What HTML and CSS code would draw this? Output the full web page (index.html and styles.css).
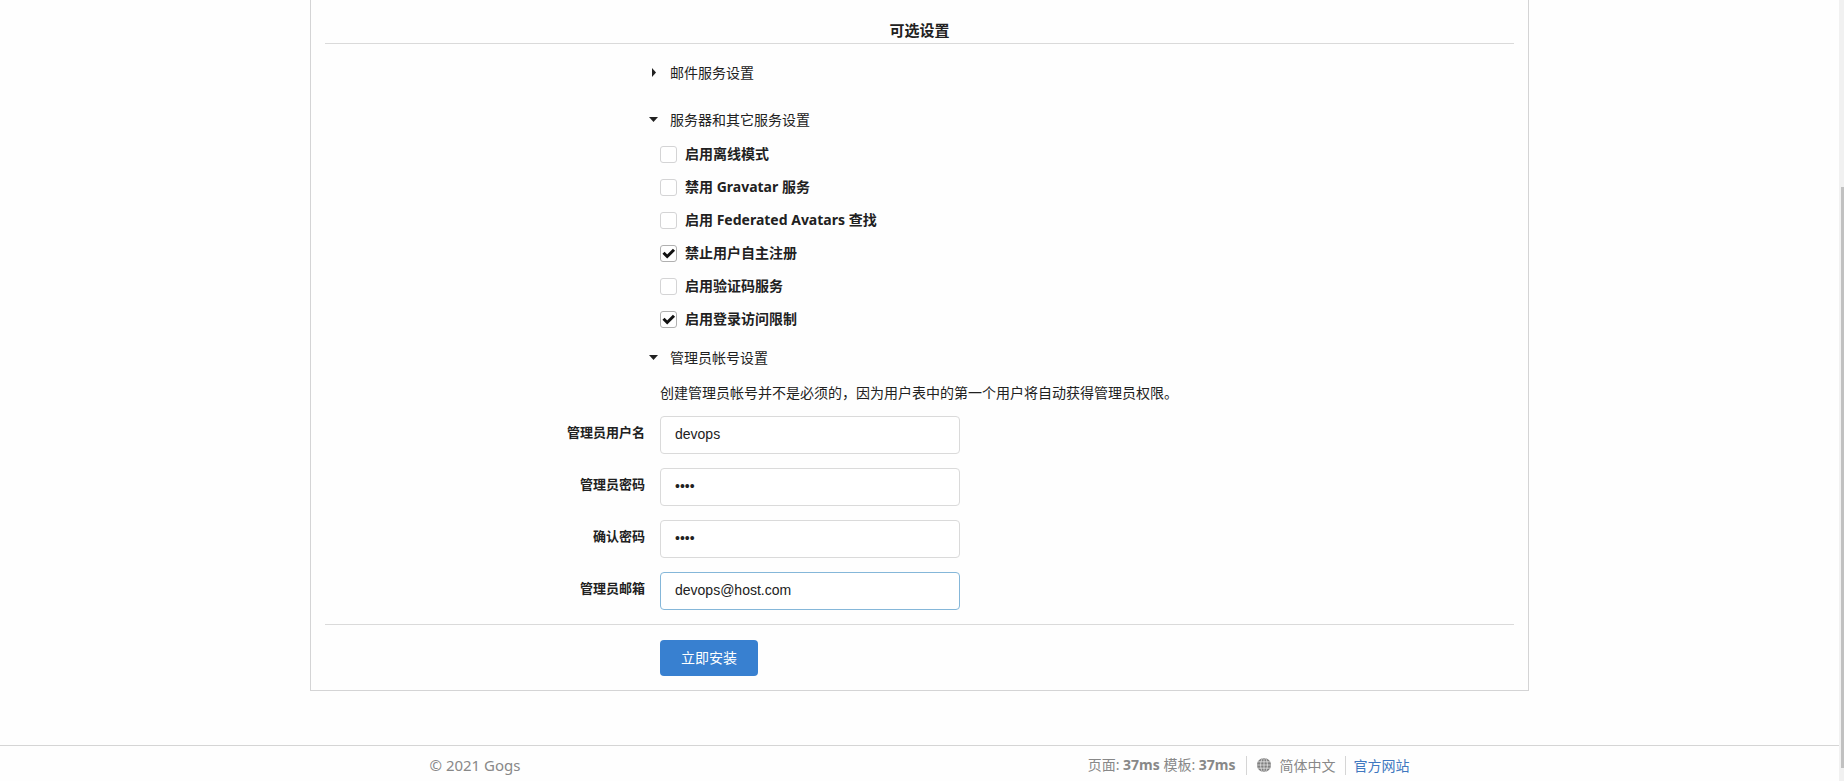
FILE: index.html
```html
<!DOCTYPE html>
<html lang="zh-CN">
<head>
<meta charset="utf-8">
<title>Gogs</title>
<link rel="stylesheet" href="styles.css">
</head>
<body>
<div class="page">
  <main class="content">
    <form class="card">
      <h4 class="divider-title">可选设置</h4>

      <button type="button" class="toggle toggle-closed"><svg class="caret" viewBox="0 0 10 10"><path d="M3 0v9l4-4.500z"/></svg>邮件服务设置</button>

      <button type="button" class="toggle"><svg class="caret" viewBox="0 0 10 10"><path d="M0 2h9l-4.500 5z"/></svg>服务器和其它服务设置</button>
      <div class="options">
        <label class="check"><span class="box"><input type="checkbox"><svg viewBox="0 0 17 17"><path d="M3.500 7.800l3.700 3.700 6.800-6.800"/></svg></span>启用离线模式</label>
        <label class="check"><span class="box"><input type="checkbox"><svg viewBox="0 0 17 17"><path d="M3.500 7.800l3.700 3.700 6.800-6.800"/></svg></span>禁用 Gravatar 服务</label>
        <label class="check"><span class="box"><input type="checkbox"><svg viewBox="0 0 17 17"><path d="M3.500 7.800l3.700 3.700 6.800-6.800"/></svg></span>启用 Federated Avatars 查找</label>
        <label class="check"><span class="box"><input type="checkbox" checked><svg viewBox="0 0 17 17"><path d="M3.500 7.800l3.700 3.700 6.800-6.800"/></svg></span>禁止用户自主注册</label>
        <label class="check"><span class="box"><input type="checkbox"><svg viewBox="0 0 17 17"><path d="M3.500 7.800l3.700 3.700 6.800-6.800"/></svg></span>启用验证码服务</label>
        <label class="check"><span class="box"><input type="checkbox" checked><svg viewBox="0 0 17 17"><path d="M3.500 7.800l3.700 3.700 6.800-6.800"/></svg></span>启用登录访问限制</label>
      </div>

      <button type="button" class="toggle"><svg class="caret" viewBox="0 0 10 10"><path d="M0 2h9l-4.500 5z"/></svg>管理员帐号设置</button>
      <p class="hint">创建管理员帐号并不是必须的，因为用户表中的第一个用户将自动获得管理员权限。</p>
      <div class="fields">
        <div class="field"><label for="admin-name">管理员用户名</label><input id="admin-name" type="text" value="devops"></div>
        <div class="field"><label for="admin-pass">管理员密码</label><input id="admin-pass" type="password" value="pass"></div>
        <div class="field"><label for="admin-confirm">确认密码</label><input id="admin-confirm" type="password" value="pass"></div>
        <div class="field"><label for="admin-email">管理员邮箱</label><input id="admin-email" class="active" type="text" value="devops@host.com"></div>
      </div>
      <div class="actions"><button type="button" class="primary">立即安装</button></div>
    </form>
  </main>
  <footer class="footer">
    <div class="footer-inner">
      <span class="copyright">© 2021 Gogs</span>
      <div class="links">
        <span class="timing">页面: <strong>37ms</strong> 模板: <strong>37ms</strong></span>
        <button type="button" class="language"><svg class="globe" viewBox="0 0 14 14"><circle cx="7" cy="7" r="7"/><path d="M7 0v14M0 7h14M1 3.800h12M1 10.200h12M5.500 0C3 4 3 10 5.500 14M8.500 0c2.500 4 2.500 10 0 14"/></svg>简体中文</button>
        <a class="site" href="#">官方网站</a>
      </div>
    </div>
  </footer>
</div>
<div class="scroll-track"><div class="scroll-thumb"></div></div>
</body>
</html>
```
FILE: styles.css
```css
* {
  box-sizing: border-box;
}

body {
  margin: 0;
  min-height: 100vh;
  display: grid;
  grid-template-columns: minmax(0, 1fr) 5px;
  background: #fefefe;
  color: #212121;
  font: 14px/20px "Noto Sans", "Noto Sans CJK SC", sans-serif;
}

button,
input {
  font: inherit;
  color: inherit;
}

button {
  cursor: pointer;
}

.page {
  display: flex;
  flex-direction: column;
}

.content {
  flex: 1;
}

.card {
  --offset: calc(27% + 14px);
  max-width: 1219px;
  margin: 0 auto;
  padding: 20px 14px 14px;
  border: 1px solid #d4d4d5;
  border-top: 0;
}

.divider-title {
  margin: 0 0 19px;
  padding-bottom: 3px;
  border-bottom: 1px solid #dadada;
  font-size: 15px;
  line-height: 20px;
  text-align: center;
}

.toggle {
  display: flex;
  align-items: center;
  gap: 11px;
  margin-left: calc(27% - 2px);
  padding: 0;
  border: 0;
  background: none;
}

.toggle-closed {
  margin-bottom: 27px;
}

.caret {
  width: 10px;
  height: 10px;
  margin-left: 5px;
  fill: #212121;
}

.options {
  display: flex;
  flex-direction: column;
  align-items: flex-start;
  gap: 13px;
  margin: 14px 0 19px var(--offset);
}

.check {
  display: flex;
  align-items: center;
  gap: 8px;
  font-weight: 700;
}

.box {
  position: relative;
  width: 17px;
  height: 17px;
}

.box input {
  appearance: none;
  display: block;
  width: 17px;
  height: 17px;
  margin: 0;
  border: 1px solid #d4d4d5;
  border-radius: 3px;
  background: #fff;
}

.box input:checked {
  border-color: #b0b0b0;
}

.box svg {
  position: absolute;
  inset: 0;
  display: none;
  fill: none;
  stroke: #111;
  stroke-width: 3;
  pointer-events: none;
}

.box input:checked + svg {
  display: block;
}

.hint {
  margin: 15px 0 13px var(--offset);
}

.fields {
  display: flex;
  flex-direction: column;
  gap: 14px;
}

.field {
  display: grid;
  grid-template-columns: 27% minmax(0, 300px);
  gap: 14px;
}

.field label {
  padding: 6px 1px 0 0;
  font-size: 13px;
  font-weight: 700;
  text-align: right;
}

.field input {
  height: 38px;
  padding: 0 14px 2px;
  border: 1px solid #dadada;
  border-radius: 4px;
  outline: 0;
  background: #fff;
  font-family: "Liberation Sans", Arial, sans-serif;
}

.field .active {
  border-color: #85b7d9;
}

.actions {
  margin-top: 14px;
  padding: 15px 0 0 var(--offset);
  border-top: 1px solid #dadada;
}

.primary {
  display: block;
  height: 36px;
  padding: 0 21px;
  border: 0;
  border-radius: 4px;
  background: #3880d0;
  color: #fff;
}

.footer {
  height: 36px;
  border-top: 1px solid #d5d5d5;
  color: #888;
}

.footer-inner {
  display: flex;
  align-items: center;
  justify-content: space-between;
  max-width: 980px;
  height: 38px;
  margin: 0 auto;
}

.copyright {
  font-size: 15px;
}

.links {
  display: flex;
  align-items: center;
}

.language,
.site {
  height: 19px;
  line-height: 19px;
  border: 0;
  border-left: 1px solid #d5d5d5;
}

.language {
  display: flex;
  align-items: center;
  gap: 9px;
  margin: 0 9px 0 10px;
  padding: 0 0 0 10px;
  background: none;
}

.site {
  padding-left: 8px;
  color: #4078c0;
  text-decoration: none;
}

.globe {
  width: 14px;
  height: 14px;
  fill: #808080;
}

.globe path {
  fill: none;
  stroke: #fefefe;
  stroke-width: 0.6;
}

.scroll-track {
  background: #f1f1f1;
}

.scroll-thumb {
  height: 581px;
  margin: 187px 0 0 2px;
  background: #c1c1c1;
}
```
